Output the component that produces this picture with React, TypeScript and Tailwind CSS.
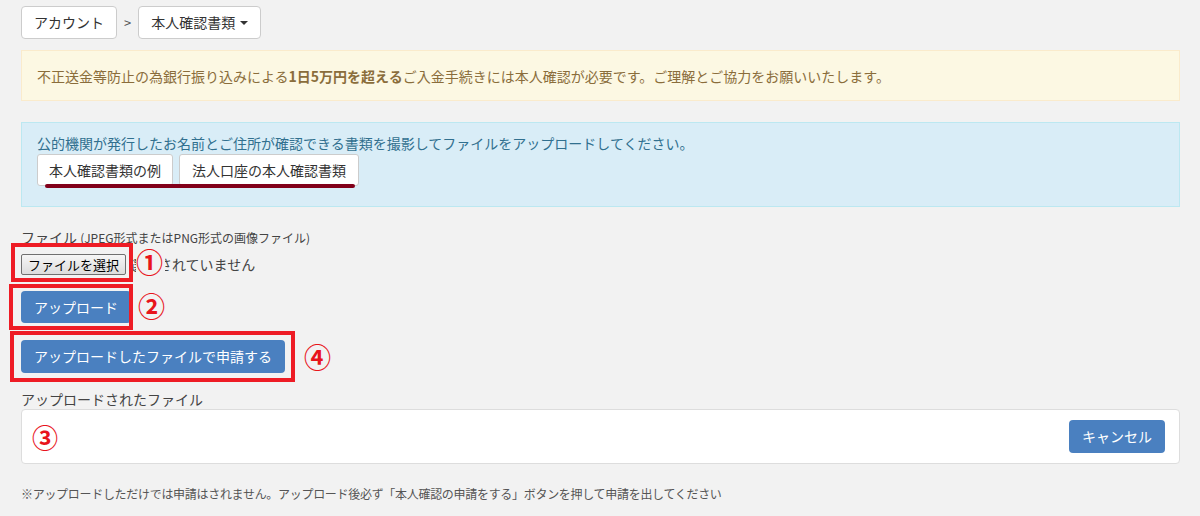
import React from "react"

const font = "font-['Noto_Sans_CJK_JP','Noto_Sans',sans-serif]"

function Mark({ n, className }: { n: string; className: string }) {
  return (
    <span className={`absolute text-[27px] leading-[22px] font-bold text-[#e8141c] bg-[#f2f2f2] ${className}`}>{n}</span>
  )
}

export default function App() {
  return (
    <div className={`relative min-h-[516px] w-[1200px] bg-[#f2f2f2] pl-[21px] pr-[20px] pt-[6px] text-[#333] ${font}`}>
      {/* breadcrumb */}
      <div className="flex items-center">
        <div className="h-[33px] flex items-center px-[12px] bg-white border border-[#ccc] rounded-[4px] text-[14px] text-[#333]">アカウント</div>
        <span className="mx-[7px] text-[13px] text-[#555]">&gt;</span>
        <div className="h-[33px] flex items-center pl-[12px] pr-[12px] bg-white border border-[#ccc] rounded-[4px] text-[14px] text-[#333]">
          本人確認書類
          <span className="ml-[5px] w-0 h-0 border-l-[4px] border-r-[4px] border-t-[4px] border-l-transparent border-r-transparent border-t-[#333]" />
        </div>
      </div>

      {/* warning */}
      <div className="mt-[11px] h-[51px] flex items-center px-[15px] bg-[#fcf8e3] border border-[#faebcc] text-[#8a6d3b] text-[14px] leading-[20px]">
        <p>不正送金等防止の為銀行振り込みによる<b>1日5万円を超える</b>ご入金手続きには本人確認が必要です。ご理解とご協力をお願いいたします。</p>
      </div>

      {/* info */}
      <div className="mt-[21px] h-[85px] px-[15px] pt-[15px] bg-[#d9edf7] border border-[#bce8f1] text-[#31708f] text-[14px] leading-[20px]">
        <p className="-mt-[5px]">公的機関が発行したお名前とご住所が確認できる書類を撮影してファイルをアップロードしてください。</p>
        <div className="relative mt-[1px] flex gap-[6px]">
          <div className="h-[32px] flex items-center px-[11px] bg-white border border-[#ccc] rounded-[3px] text-[#333]">本人確認書類の例</div>
          <div className="h-[32px] flex items-center px-[12px] bg-white border border-[#ccc] rounded-[3px] text-[#333]">法人口座の本人確認書類</div>
          <span className="absolute left-[8px] top-[30px] w-[310px] h-[4px] rounded-full bg-[#82001a]" />
        </div>
      </div>

      {/* file form */}
      <div className="mt-[20px] text-[14px] leading-[20px] text-[#444]">
        ファイル <span className="text-[12px]">(JPEG形式またはPNG形式の画像ファイル)</span>
      </div>
      <div className="mt-[6px] flex items-center">
        <button className="h-[21px] px-[6px] text-[13px] leading-[17px] text-black bg-gradient-to-b from-[#f6f6f6] to-[#dddddd] border border-[#707070] rounded-[2px]">ファイルを選択</button>
        <span className="ml-[4px] text-[14px] text-[#444]">選択されていません</span>
      </div>
      <div className="mt-[16px]">
        <button className="h-[32px] px-[13px] rounded-[4px] bg-[#4a80c0] text-white text-[14px]">アップロード</button>
      </div>
      <div className="mt-[17px]">
        <button className="h-[33px] px-[13px] rounded-[4px] bg-[#4a80c0] text-white text-[14px]">アップロードしたファイルで申請する</button>
      </div>

      <div className="mt-[16px] text-[14px] leading-[20px] text-[#444]">アップロードされたファイル</div>
      <div className="h-[55px] flex items-center justify-between pl-[10px] pr-[14px] bg-white border border-[#ddd] rounded-[4px]">
        <span className="text-[26px] leading-[28px] font-bold text-[#e8141c]">③</span>
        <button className="h-[33px] px-[13px] rounded-[4px] bg-[#4a80c0] text-white text-[14px]">キャンセル</button>
      </div>

      <p className="mt-[21px] text-[12px] leading-[18px] text-[#555] tracking-[-0.3px]">
        ※アップロードしただけでは申請はされません。アップロード後必ず「本人確認の申請をする」ボタンを押して申請を出してください
      </p>

      {/* annotations */}
      <span className="absolute left-[11px] top-[243px] w-[122px] h-[39px] border-[4px] border-[#ee1c25]" />
      <span className="absolute left-[9px] top-[284px] w-[124px] h-[46px] border-[4px] border-[#ee1c25]" />
      <span className="absolute left-[10px] top-[331px] w-[285px] h-[51px] border-[4px] border-[#ee1c25]" />
      <Mark n="①" className="left-[136px] top-[251px] pr-[2px]" />
      <Mark n="②" className="left-[138px] top-[295px]" />
      <Mark n="④" className="left-[304px] top-[346px]" />
    </div>
  )
}
